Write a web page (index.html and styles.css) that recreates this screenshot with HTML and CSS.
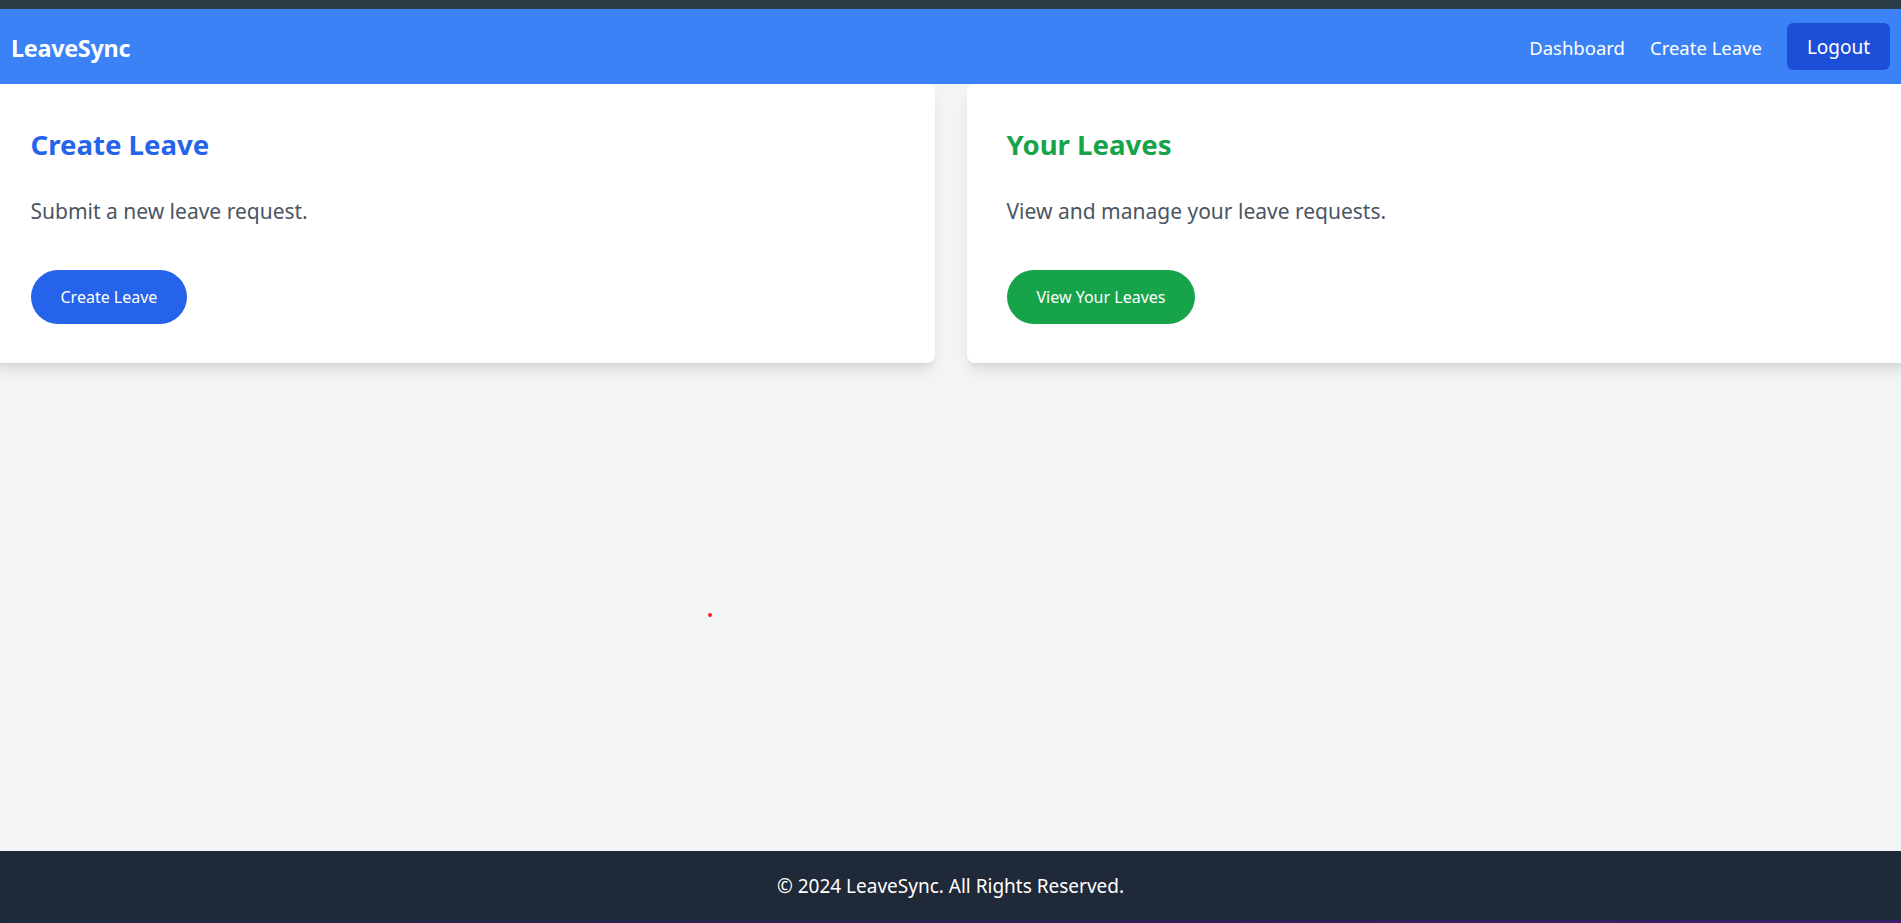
FILE: index.html
```html
<!DOCTYPE html>
<html lang="en">
<head>
<meta charset="utf-8">
<title>LeaveSync</title>
<link rel="stylesheet" href="styles.css">
</head>
<body>
<div class="topstrip"></div>
<nav class="navbar">
  <a class="brand" href="#">LeaveSync</a>
  <div class="navlinks">
    <a class="navlink" href="#">Dashboard</a>
    <a class="navlink" href="#">Create Leave</a>
    <button class="logout">Logout</button>
  </div>
</nav>
<main class="main">
  <div class="cards">
    <section class="card">
      <h2 class="card-title blue">Create Leave</h2>
      <p class="card-text">Submit a new leave request.</p>
      <a class="pill pill-blue" href="#">Create Leave</a>
    </section>
    <section class="card">
      <h2 class="card-title green">Your Leaves</h2>
      <p class="card-text">View and manage your leave requests.</p>
      <a class="pill pill-green" href="#">View Your Leaves</a>
    </section>
  </div>
  <span class="dot"></span>
</main>
<footer class="footer">
  <p>© 2024 LeaveSync. All Rights Reserved.</p>
</footer>
<div class="bottomstrip"></div>
</body>
</html>
```

FILE: styles.css
```css
* { box-sizing: border-box; }
html, body { margin: 0; padding: 0; }
body {
  font-family: "Segoe UI", "Noto Sans", "Open Sans", sans-serif;
  background: #f3f4f6;
  height: 923px;
  display: flex;
  flex-direction: column;
  overflow: hidden;
}
a { text-decoration: none; }

.topstrip { height: 9px; background: #2a3d46; flex: none; }

.navbar {
  height: 75px;
  flex: none;
  background: #3b82f6;
  display: flex;
  align-items: center;
  justify-content: space-between;
  padding: 0 11px;
}
.brand {
  color: #fff;
  font-weight: 700;
  font-size: 23.4px;
  letter-spacing: -0.3px;
  padding-top: 2px;
}
.navlinks {
  display: flex;
  align-items: center;
  gap: 25px;
}
.navlink {
  color: #fff;
  font-size: 18.5px;
  padding-top: 2px;
}
.logout {
  font-family: inherit;
  background: #1d4ed8;
  color: #fff;
  border: none;
  border-radius: 6px;
  height: 47px;
  width: 103px;
  font-size: 19px;
  padding: 1px 0 0;
}

.main {
  flex: 1;
  position: relative;
}
.cards {
  display: grid;
  grid-template-columns: 1fr 1fr;
  gap: 32px;
  margin: 0 -9.5px;
}
.card {
  background: #fff;
  border-radius: 8px;
  box-shadow: 0 10px 15px -3px rgba(0,0,0,0.1), 0 4px 6px -4px rgba(0,0,0,0.1);
  padding: 40px 40px 0;
  height: 279px;
}
.card-title {
  margin: 0;
  font-size: 27.6px;
  line-height: 40px;
  font-weight: 700;
}
.blue { color: #2563eb; }
.green { color: #16a34a; }
.card-text {
  margin: 32px 0 0;
  font-size: 21px;
  line-height: 30px;
  color: #4b5563;
}
.pill {
  display: inline-flex;
  align-items: center;
  justify-content: center;
  margin-top: 44px;
  height: 54px;
  padding: 0 30px;
  border-radius: 27px;
  color: #fff;
  font-size: 16px;
}
.pill-blue { background: #2563eb; }
.pill-green { background: #16a34a; }

.dot {
  position: absolute;
  left: 708px;
  top: 529px;
  width: 4px;
  height: 4px;
  border-radius: 50%;
  background: #ff1a1a;
}

.footer {
  height: 69px;
  flex: none;
  background: #1f2937;
  display: flex;
  align-items: center;
  justify-content: center;
}
.footer p {
  margin: 0;
  color: #fff;
  font-size: 19px;
}
.bottomstrip {
  height: 3px;
  flex: none;
  background: linear-gradient(90deg, #1b2a3a 0%, #2a2050 50%, #3a1d6a 100%);
}
```
